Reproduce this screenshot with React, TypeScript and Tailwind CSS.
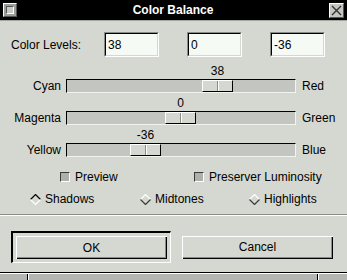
import React from 'react';

function Field({ value }: { value: string }) {
    return (
        <div className="h-[25px] w-[55px] border-t border-l border-t-[#8a8c88] border-l-[#8a8c88] border-b border-r border-b-white border-r-white">
            <div className="flex h-full w-full items-center border-t border-l border-t-black border-l-black border-b border-r border-b-[#d4d8d0] border-r-[#d4d8d0] bg-[#f5faf4] pl-[2px] text-[12px]">
                {value}
            </div>
        </div>
    );
}

function Slider({ left, right, value }: { left: string; right: string; value: number }) {
    const pos = Math.round(98 + value * 0.975);
    return (
        <div className="flex flex-col">
            <div className="flex h-[18px]">
                <div className="w-[67px]" />
                <div className="relative w-[229px]">
                    <span className="absolute bottom-[2px] -translate-x-1/2 leading-none" style={{ left: pos + 15.5 }}>
                        {value}
                    </span>
                </div>
            </div>
            <div className="flex h-[14px] items-center">
                <span className="w-[61px] text-right leading-none">{left}</span>
                <div className="relative ml-[5px] h-[14px] w-[230px] border border-t-black border-l-black border-b-[#f2f4f0] border-r-[#f2f4f0] bg-[#c3c5c1]">
                    <div
                        className="absolute top-0 flex h-[12px] w-[31px] justify-center border border-t-white border-l-white border-b-black border-r-black bg-[#d4d8d0]"
                        style={{ left: pos }}
                    >
                        <div className="h-full w-px bg-[#8a8c88]" />
                        <div className="h-full w-px bg-white" />
                    </div>
                </div>
                <span className="ml-[6px] leading-none">{right}</span>
            </div>
        </div>
    );
}

function Check({ label }: { label: string }) {
    return (
        <div className="flex items-center gap-[5px]">
            <div className="h-[10px] w-[10px] border border-t-[#3a3a3a] border-l-[#3a3a3a] border-b-white border-r-white bg-[#aeb0ac]" />
            <span className="leading-none">{label}</span>
        </div>
    );
}

function Radio({ label, on }: { label: string; on?: boolean }) {
    const top = on ? '#000' : '#fff';
    const bottom = on ? '#fff' : '#3a3a3a';
    return (
        <div className="flex items-center gap-[4px]">
            <svg width="11" height="11" viewBox="0 0 11 11">
                <polygon points="5.5,0.5 10.5,5.5 5.5,10.5 0.5,5.5" fill="#d4d8d0" />
                <polyline points="0.5,5.5 5.5,0.5 10.5,5.5" fill="none" stroke={top} strokeWidth="1.2" />
                <polyline points="0.5,5.5 5.5,10.5 10.5,5.5" fill="none" stroke={bottom} strokeWidth="1.2" />
            </svg>
            <span className="leading-none">{label}</span>
        </div>
    );
}

function Button({ label }: { label: string }) {
    return (
        <div className="flex h-[23px] w-[151px] items-center justify-center bg-[#d4d8d0] shadow-[inset_1px_1px_0_#fff,inset_-1px_-1px_0_#000,inset_-2px_-2px_0_#8a8c88]">
            {label}
        </div>
    );
}

export default function App() {
    return (
        <div className="flex h-[280px] w-[347px] flex-col overflow-hidden bg-[#d4d8d0] text-[12px] text-black [font-family:'Liberation_Sans',Arial,sans-serif]">
            <div className="flex h-[20px] items-center bg-black px-[3px]">
                <div className="flex h-[14px] w-[14px] items-center justify-center border border-t-white border-l-white border-b-[#555] border-r-[#555] bg-[#9c9e9a]">
                    <div className="h-[8px] w-[8px] border border-t-[#555] border-l-[#555] border-b-white border-r-white bg-[#c8cac6]" />
                </div>
                <div className="flex-1 text-center text-[12px] font-bold text-white">Color Balance</div>
                <div className="h-[15px] w-[15px] border border-t-white border-l-white border-b-[#555] border-r-[#555] bg-[#c4c6c2]">
                    <svg width="13" height="13" viewBox="0 0 13 13">
                        <path d="M2 2 L11 11 M11 2 L2 11" stroke="#333" strokeWidth="1.4" />
                    </svg>
                </div>
            </div>
            <div className="h-px bg-[#a4a6a2]" />

            <div className="mt-[11px] flex h-[25px] items-center">
                <span className="w-[104px] pl-[11px]">Color Levels:</span>
                <div className="flex gap-[28px]">
                    <Field value="38" />
                    <Field value="0" />
                    <Field value="-36" />
                </div>
            </div>

            <div className="mt-[4px] flex flex-col">
                <Slider left="Cyan" right="Red" value={38} />
                <Slider left="Magenta" right="Green" value={0} />
                <Slider left="Yellow" right="Blue" value={-36} />
            </div>

            <div className="mt-[13px] flex h-[14px] items-center pl-[60px]">
                <div className="w-[134px]">
                    <Check label="Preview" />
                </div>
                <Check label="Preserver Luminosity" />
            </div>

            <div className="mt-[8px] flex h-[14px] items-center pl-[30px]">
                <div className="w-[110px]">
                    <Radio label="Shadows" on />
                </div>
                <div className="w-[109px]">
                    <Radio label="Midtones" />
                </div>
                <Radio label="Highlights" />
            </div>

            <div className="mt-[8px] h-px bg-[#8a8c88]" />
            <div className="h-px bg-white" />

            <div className="mt-[15px] flex items-center pl-[11px]">
                <div className="flex h-[32px] w-[160px] items-center border-t-2 border-l-2 border-t-black border-l-black border-b border-r border-b-white border-r-white pl-[3px]">
                    <Button label="OK" />
                </div>
                <div className="ml-[11px]">
                    <Button label="Cancel" />
                </div>
            </div>

            <div className="mt-auto h-px bg-black" />
            <div className="flex h-[7px] border-t border-t-white bg-[#b4b6b2]">
                <div className="w-[28px] border-r border-r-black" />
                <div className="w-[290px] border-l border-l-white border-r border-r-black" />
                <div className="flex-1 border-l border-l-white" />
            </div>
        </div>
    );
}
